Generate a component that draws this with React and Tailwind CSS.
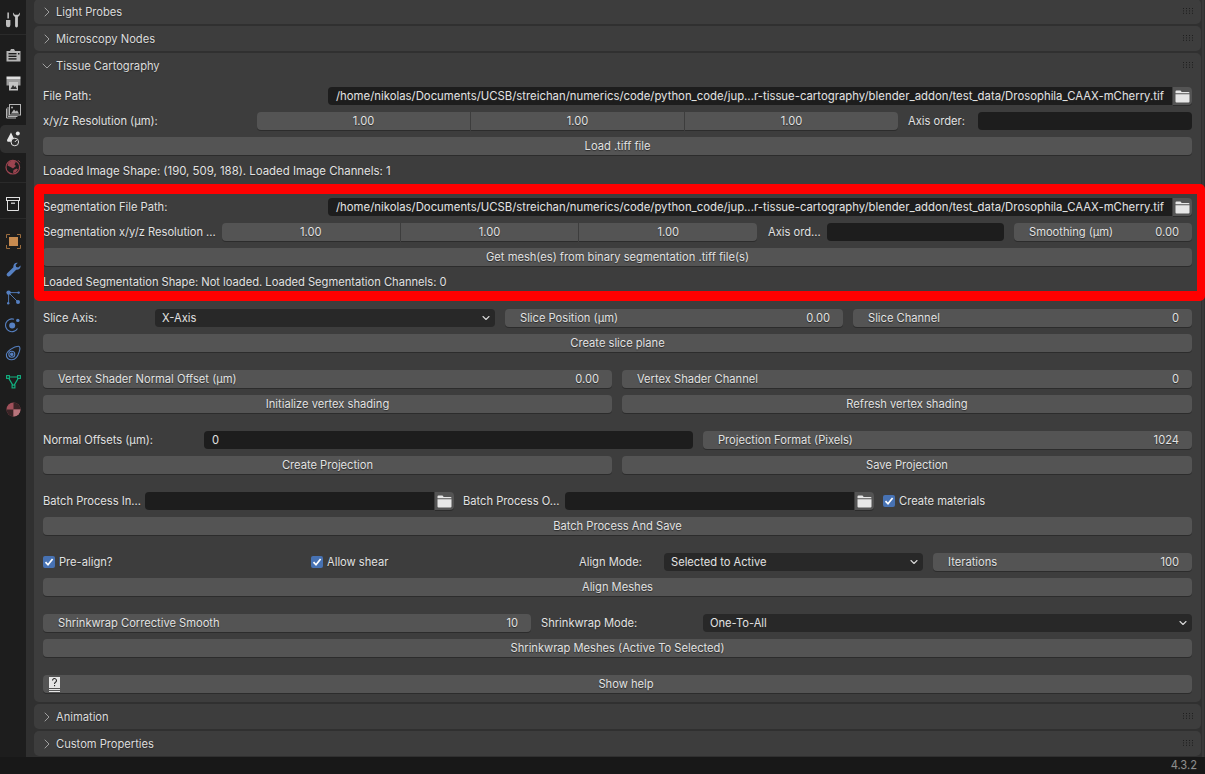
import { ChevronRight, ChevronDown } from 'lucide-react';

const PATH = '/home/nikolas/Documents/UCSB/streichan/numerics/code/python_code/jup...r-tissue-cartography/blender_addon/test_data/Drosophila_CAAX-mCherry.tif';

const btn = 'h-[18px] bg-[#545454] shadow-[0_1px_0_#2c2c2c] flex items-center';

function Grip() {
  const dots = [];
  for (let x = 0; x < 4; x++) {
    for (let y = 0; y < 3; y++) {
      dots.push(<rect key={`${x}-${y}`} x={x * 3} y={y * 2.4} width="1" height="1" fill="#161616" opacity="0.8" />);
    }
  }
  return (
    <svg width="11" height="6" viewBox="0 0 11 6" className="ml-auto mr-[7px] mt-[-2px]">
      {dots}
    </svg>
  );
}

function Header({ title, open }) {
  const Icon = open ? ChevronDown : ChevronRight;
  return (
    <div className="h-[25px] flex items-center pl-[5px] pt-[1px] text-[#dcdcdc]">
      <Icon size={16} strokeWidth={1.1} className="text-[#c4c4c4] mr-[1px] mt-[-1px]" />
      <span>{title}</span>
      <Grip />
    </div>
  );
}

function Closed({ title }) {
  return (
    <div className="bg-[#3d3d3d] rounded-[5px] shrink-0">
      <Header title={title} />
    </div>
  );
}

function Button({ children, className = '' }) {
  return <div className={`${btn} rounded-[4px] justify-center ${className}`}>{children}</div>;
}

function Label({ children, className = '' }) {
  return <div className={`h-[18px] flex items-center whitespace-nowrap shrink-0 ${className}`}>{children}</div>;
}

function Field({ children, className = '' }) {
  return (
    <div className={`h-[18px] bg-[#1d1d1d] rounded-[4px] flex items-center px-[8px] whitespace-nowrap overflow-hidden ${className}`}>
      {children}
    </div>
  );
}

function Num({ label, value, className = '' }) {
  return (
    <div className={`${btn} rounded-[4px] justify-between pl-[15px] pr-[13px] ${className}`}>
      <span>{label}</span>
      <span>{value}</span>
    </div>
  );
}

function Triple({ className = '' }) {
  return (
    <div className={`flex gap-[1px] ${className}`}>
      <div className={`${btn} flex-1 justify-center rounded-l-[4px]`}>1.00</div>
      <div className={`${btn} flex-1 justify-center`}>1.00</div>
      <div className={`${btn} flex-1 justify-center rounded-r-[4px]`}>1.00</div>
    </div>
  );
}

function FolderButton() {
  return (
    <div className={`${btn} w-[19px] justify-center rounded-r-[4px] shrink-0`}>
      <svg width="15" height="13" viewBox="0 0 15 13">
        <path d="M0.5 1.5a1 1 0 0 1 1-1h4l1.2 1.5h6.8a1 1 0 0 1 1 1v0.3H0.5z" fill="#e6e6e6" />
        <path d="M0.5 4.2h14V11.5a1 1 0 0 1-1 1h-12a1 1 0 0 1-1-1z" fill="#e6e6e6" />
      </svg>
    </div>
  );
}

function PathRow({ label }) {
  return (
    <div className="flex h-[18px]">
      <Label className="w-[285px]">{label}</Label>
      <Field className="flex-1 rounded-r-none text-[11.35px]">{PATH}</Field>
      <div className="w-[1px]" />
      <FolderButton />
    </div>
  );
}

function Select({ value, className = '' }) {
  return (
    <div className={`h-[18px] bg-[#282828] rounded-[4px] flex items-center justify-between pl-[7px] pr-[3px] ${className}`}>
      <span>{value}</span>
      <ChevronDown size={12} strokeWidth={2.2} className="text-[#d8d8d8]" />
    </div>
  );
}

function Check({ label, className = '' }) {
  return (
    <div className={`h-[18px] flex items-center ${className}`}>
      <div className="w-[12px] h-[12px] rounded-[2px] bg-[#4772b3] flex items-center justify-center mr-[4px]">
        <svg width="10" height="10" viewBox="0 0 10 10">
          <path d="M1.5 5.2L4 7.8L8.6 2" fill="none" stroke="#fff" strokeWidth="1.7" />
        </svg>
      </div>
      <span>{label}</span>
    </div>
  );
}

function Group({ children, className = '' }) {
  return <div className={`flex flex-col gap-[7px] ${className}`}>{children}</div>;
}

function SideIcon({ children, active, className = '' }) {
  return (
    <div className={`h-[28px] w-[26px] flex items-center justify-center shrink-0 ${active ? 'bg-[#303030] rounded-l-[5px]' : ''} ${className}`}>
      {children}
    </div>
  );
}

function Sidebar() {
  return (
    <div className="w-[26px] shrink-0 bg-[#1d1d1d] flex flex-col pt-[6px]">
      <SideIcon>
        <svg width="16" height="16" viewBox="0 0 16 16" fill="#c6c6c6">
          <rect x="2.4" y="0.5" width="1.5" height="6" />
          <path d="M1 8h4.4v5a2.2 2.2 0 0 1-4.4 0z" fill="#bdbdbd" />
          <path d="M8 0.6c0 0-0.4 3.2 2.1 4.4V14a1.4 1.4 0 0 0 2.8 0V5C15.4 3.8 15 0.6 15 0.6L13.2 2.8h-3.4z" />
        </svg>
      </SideIcon>
      <div className="h-[1px] bg-[#2a2a2a] shrink-0 mb-[6px]" />
      <SideIcon>
        <svg width="15" height="14" viewBox="0 0 15 14">
          <path d="M0.5 3h3.5l1-2h3l1 2h5.5v10.5H0.5z" fill="#b5b5b5" />
          <rect x="2.5" y="5" width="8" height="1.4" fill="#1d1d1d" />
          <rect x="2.5" y="7.6" width="8" height="1.4" fill="#1d1d1d" />
          <rect x="2.5" y="10.2" width="8" height="1.4" fill="#1d1d1d" />
          <rect x="12" y="5" width="1.5" height="1.5" fill="#1d1d1d" />
        </svg>
      </SideIcon>
      <SideIcon>
        <svg width="15" height="15" viewBox="0 0 15 15">
          <rect x="0.5" y="0.5" width="14" height="2.5" fill="#e0e0e0" />
          <path d="M0.5 3h14v6.5h-2.5V6H3v3.5H0.5z" fill="#9c9c9c" />
          <rect x="3" y="6" width="9" height="8.5" fill="#c4c4c4" />
          <path d="M4.5 13l2.5-4 1.5 2 1-1 1.5 3z" fill="#333" />
        </svg>
      </SideIcon>
      <SideIcon>
        <svg width="15" height="15" viewBox="0 0 15 15" fill="none" stroke="#b5b5b5">
          <rect x="3.5" y="0.5" width="11" height="10.5" strokeWidth="1" />
          <path d="M5 9.5l3-4 1.8 2 1.2-1.2 2 3.2z" fill="#b5b5b5" stroke="none" />
          <circle cx="6" cy="3.5" r="1" fill="#b5b5b5" stroke="none" />
          <path d="M2 3v9.5h9.5M0.5 4.5v9.5h9.5" strokeWidth="1" />
        </svg>
      </SideIcon>
      <SideIcon active>
        <svg width="15" height="16" viewBox="0 0 15 16">
          <path d="M5 1.5L8.4 8.6a3.4 3.4 0 0 1-1 2.2H1.6A4 4 0 0 1 1 9z" fill="#e6e6e6" />
          <circle cx="11.8" cy="2.6" r="2" fill="#e6e6e6" />
          <circle cx="8.8" cy="11" r="3.8" fill="#303030" stroke="#e0e0e0" strokeWidth="1" />
          <path d="M8.8 11l2-2" stroke="#e0e0e0" strokeWidth="1" />
        </svg>
      </SideIcon>
      <SideIcon>
        <svg width="16" height="16" viewBox="0 0 16 16">
          <circle cx="7.8" cy="8.2" r="6.8" fill="none" stroke="#9c4450" strokeWidth="1.2" />
          <path d="M3.5 3.6l3.5-2 4 1-1.5 3 1.5 1.5-3 2.5-2.5-1.5-3-1.5zM8.5 11l3-1.5 1.5 1-2.5 3-2.5 0.5z" fill="#9c4450" />
          <path d="M13 1.2l2 2" stroke="#9c4450" strokeWidth="1" />
        </svg>
      </SideIcon>
      <div className="h-[1px] bg-[#2a2a2a] shrink-0 mb-[7px] mt-[1px]" />
      <SideIcon>
        <svg width="14" height="14" viewBox="0 0 14 14" fill="none" stroke="#e0e0e0" strokeWidth="1">
          <rect x="0.5" y="0.5" width="13" height="3" />
          <path d="M1.5 3.5v10h11v-10" />
          <rect x="5" y="5.6" width="4" height="1.2" fill="#e0e0e0" stroke="none" />
        </svg>
      </SideIcon>
      <div className="h-[1px] bg-[#2a2a2a] shrink-0 mb-[8px]" />
      <SideIcon>
        <svg width="15" height="15" viewBox="0 0 15 15">
          <rect x="3" y="3" width="9" height="9" fill="#c78a4f" />
          <path d="M0.5 4V0.5H4M11 0.5h3.5V4M14.5 11v3.5H11M4 14.5H0.5V11" fill="none" stroke="#9a6c3e" strokeWidth="1" />
        </svg>
      </SideIcon>
      <SideIcon>
        <svg width="15" height="15" viewBox="0 0 15 15">
          <path d="M14.6 3.4c0.4 2.6-1.8 4.8-4.4 4.4L4.2 13.8a1.9 1.9 0 0 1-3-2.6l6.2-6C7 2.4 9.2 0.2 11.8 0.8L9.6 3l0.6 2 2 0.6z" fill="#5680c2" />
        </svg>
      </SideIcon>
      <SideIcon>
        <svg width="15" height="15" viewBox="0 0 15 15" fill="#5680c2">
          <circle cx="2.6" cy="2.6" r="2.2" />
          <circle cx="12" cy="12" r="2" />
          <circle cx="12.6" cy="2.6" r="1.2" />
          <circle cx="2.2" cy="13.2" r="1.2" />
          <path d="M2.6 2.6L12 12M2.6 2.6h10M2.6 2.6v10.6" stroke="#5680c2" strokeWidth="0.9" />
        </svg>
      </SideIcon>
      <SideIcon>
        <svg width="16" height="16" viewBox="0 0 16 16">
          <path d="M12.5 11.5A6.4 6.4 0 1 1 9 2.2" fill="none" stroke="#5680c2" strokeWidth="1.1" />
          <circle cx="7.2" cy="8.6" r="3" fill="#5680c2" />
          <circle cx="12.8" cy="3.4" r="1.7" fill="#5680c2" />
        </svg>
      </SideIcon>
      <SideIcon>
        <svg width="16" height="16" viewBox="0 0 16 16" fill="none" stroke="#5680c2" strokeWidth="1.1">
          <path d="M1.4 9.5C1.8 6.5 9 1 13.5 1.2c2 0.2 1.6 3 0.6 6-1 3.4-3.4 7.4-7.2 7.6C3.4 15 1 12.5 1.4 9.5z" />
          <circle cx="6.8" cy="9.2" r="3" />
          <circle cx="6.8" cy="9.2" r="1.2" fill="#5680c2" />
        </svg>
      </SideIcon>
      <SideIcon>
        <svg width="15" height="15" viewBox="0 0 15 15" fill="none" stroke="#12b382" strokeWidth="1.1">
          <rect x="0.6" y="1.6" width="2.8" height="2.8" />
          <rect x="11.6" y="1.6" width="2.8" height="2.8" />
          <rect x="6.1" y="11.1" width="2.8" height="2.8" />
          <path d="M3.4 3h8.2M2.8 4.4l4 6.7M12.2 4.4l-4 6.7" />
        </svg>
      </SideIcon>
      <SideIcon>
        <svg width="15" height="15" viewBox="0 0 15 15">
          <circle cx="7.5" cy="7.5" r="7" fill="#a0505a" />
          <path d="M7.5 7.5V0.5A7 7 0 0 1 14.5 7.5z" fill="#3a2426" />
          <path d="M7.5 7.5H0.5A7 7 0 0 0 7.5 14.5z" fill="#3a2426" />
          <path d="M7.5 7.5H14.5A7 7 0 0 1 7.5 14.5z" fill="#b8757c" />
        </svg>
      </SideIcon>
    </div>
  );
}

export default function App() {
  return (
    <div
      className="w-[1205px] h-[774px] overflow-hidden flex flex-col bg-[#181818] text-[#e2e2e2] text-[11.15px] leading-[15px] [text-shadow:0_1px_1px_#2a2a2a]"
      style={{ fontFamily: 'Inter, "Noto Sans", sans-serif' }}
    >
      <div className="flex h-[757px] shrink-0 overflow-hidden">
        <Sidebar />
        <div className="flex-1 bg-[#303030] flex pl-[8px] overflow-hidden">
          <div className="w-[1167px] flex flex-col gap-[2px] mt-[-1px]">
            <Closed title="Light Probes" />
            <Closed title="Microscopy Nodes" />
            <div className="bg-[#3d3d3d] rounded-[5px] shrink-0">
              <Header title="Tissue Cartography" open />
              <div className="px-[9px] pt-[9px] pb-[9px] flex flex-col gap-[18px]">
                <Group>
                  <PathRow label="File Path:" />
                  <div className="flex">
                    <Label className="w-[214px]">x/y/z Resolution (µm):</Label>
                    <Triple className="w-[641px]" />
                    <Label className="w-[80px] pl-[10px]">Axis order:</Label>
                    <Field className="w-[214px]" />
                  </div>
                  <Button>Load .tiff file</Button>
                  <Label className="text-[11.4px]">Loaded Image Shape: (190, 509, 188). Loaded Image Channels: 1</Label>
                </Group>

                <Group className="relative">
                  <PathRow label="Segmentation File Path:" />
                  <div className="flex">
                    <Label className="w-[179px]">Segmentation x/y/z Resolution ...</Label>
                    <Triple className="w-[535px]" />
                    <Label className="w-[70px] pl-[11px]">Axis ord...</Label>
                    <Field className="w-[177px]" />
                    <Num label="Smoothing (µm)" value="0.00" className="w-[178px] ml-[10px]" />
                  </div>
                  <Button>Get mesh(es) from binary segmentation .tiff file(s)</Button>
                  <Label>Loaded Segmentation Shape: Not loaded. Loaded Segmentation Channels: 0</Label>
                  <div className="absolute top-[-14px] left-[-9px] w-[1171px] h-[117px] border-[10px] border-r-[8px] border-[#ff0000] rounded-[5px] pointer-events-none" />
                </Group>

                <Group>
                  <div className="flex">
                    <Label className="w-[112px]">Slice Axis:</Label>
                    <Select value="X-Axis" className="w-[340px]" />
                    <Num label="Slice Position (µm)" value="0.00" className="w-[338px] ml-[10px]" />
                    <Num label="Slice Channel" value="0" className="w-[339px] ml-[10px]" />
                  </div>
                  <Button>Create slice plane</Button>
                </Group>

                <Group>
                  <div className="flex gap-[10px]">
                    <Num label="Vertex Shader Normal Offset (µm)" value="0.00" className="w-[569px]" />
                    <Num label="Vertex Shader Channel" value="0" className="w-[570px]" />
                  </div>
                  <div className="flex gap-[10px]">
                    <Button className="w-[569px]">Initialize vertex shading</Button>
                    <Button className="w-[570px]">Refresh vertex shading</Button>
                  </div>
                </Group>

                <Group>
                  <div className="flex">
                    <Label className="w-[161px]">Normal Offsets (µm):</Label>
                    <Field className="w-[489px]">0</Field>
                    <Num label="Projection Format (Pixels)" value="1024" className="w-[489px] ml-[10px]" />
                  </div>
                  <div className="flex gap-[10px]">
                    <Button className="w-[569px]">Create Projection</Button>
                    <Button className="w-[570px]">Save Projection</Button>
                  </div>
                </Group>

                <Group>
                  <div className="flex">
                    <Label className="w-[102px]">Batch Process In...</Label>
                    <Field className="w-[289px] rounded-r-none" />
                    <div className="w-[1px]" />
                    <FolderButton />
                    <Label className="w-[102px] ml-[9px]">Batch Process O...</Label>
                    <Field className="w-[289px] rounded-r-none" />
                    <div className="w-[1px]" />
                    <FolderButton />
                    <Check label="Create materials" className="ml-[9px]" />
                  </div>
                  <Button>Batch Process And Save</Button>
                </Group>

                <Group>
                  <div className="flex">
                    <Check label="Pre-align?" className="w-[268px]" />
                    <Check label="Allow shear" className="w-[268px]" />
                    <Label className="w-[85px]">Align Mode:</Label>
                    <Select value="Selected to Active" className="w-[259px]" />
                    <Num label="Iterations" value="100" className="w-[259px] ml-[10px]" />
                  </div>
                  <Button>Align Meshes</Button>
                </Group>

                <Group>
                  <div className="flex">
                    <Num label="Shrinkwrap Corrective Smooth" value="10" className="w-[488px]" />
                    <Label className="w-[162px] ml-[10px]">Shrinkwrap Mode:</Label>
                    <Select value="One-To-All" className="w-[489px]" />
                  </div>
                  <Button>Shrinkwrap Meshes (Active To Selected)</Button>
                </Group>

                <Button className="relative pl-[17px]">
                  <svg width="13" height="16" viewBox="0 0 13 16" className="absolute left-[5px] top-[2px]">
                    <path d="M1 0h11v11H1z" fill="#e6e6e6" />
                    <path d="M1 12h11v1H1zM1 14h11v1H1z" fill="#e6e6e6" />
                    <path d="M4.5 3.5a2 2 0 1 1 3 1.8c-0.6 0.4-1 0.7-1 1.6" fill="none" stroke="#2a2a2a" strokeWidth="1.1" />
                    <rect x="6" y="8" width="1.1" height="1.2" fill="#2a2a2a" />
                  </svg>
                  Show help
                </Button>
              </div>
            </div>
            <Closed title="Animation" />
            <Closed title="Custom Properties" />
          </div>
          <div className="w-[2px] ml-[1px] bg-[#3a3a3a]" />
        </div>
      </div>
      <div className="flex-1 flex items-center justify-end pr-[8px] text-[#8e8e8e]">4.3.2</div>
    </div>
  );
}
